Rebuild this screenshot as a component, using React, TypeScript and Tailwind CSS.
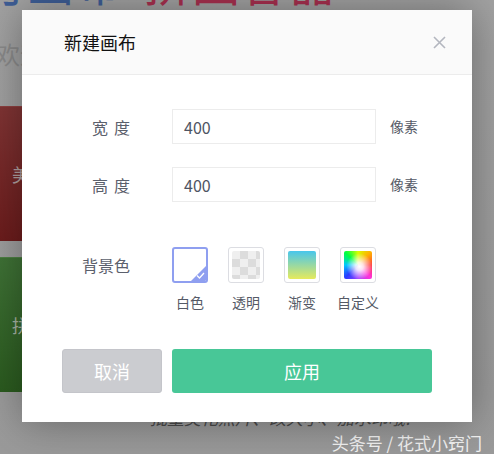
import React from "react";

const cjk = { fontFamily: '"Noto Sans CJK SC", "Noto Sans", sans-serif' };

function Swatch({ kind, label }: { kind: string; label: string }) {
  let box: React.ReactNode;
  if (kind === "white") {
    box = (
      <div className="relative w-[36px] h-[36px] rounded-[3px] border-2 border-[#8f9ff0] bg-white overflow-hidden">
        <div className="absolute right-0 bottom-0 w-[15px] h-[15px] bg-[#8f9ff0] [clip-path:polygon(100%_0,100%_100%,0_100%)]" />
        <svg className="absolute right-[1px] bottom-[2px]" width="9" height="7" viewBox="0 0 9 7">
          <path d="M1 3.5 L3.5 6 L8 1" fill="none" stroke="white" strokeWidth="1.3" />
        </svg>
      </div>
    );
  } else {
    const inner =
      kind === "transparent"
        ? "bg-[image:conic-gradient(#dcdcdc_25%,#efefef_0_50%,#dcdcdc_0_75%,#efefef_0)] bg-[length:16px_16px]"
        : kind === "gradient"
        ? "bg-[image:linear-gradient(180deg,#48c6ec,#e6ea5c)]"
        : "bg-[image:radial-gradient(circle_at_55%_55%,#ffffff_0%,rgba(255,255,255,0.85)_18%,rgba(255,255,255,0)_60%),conic-gradient(from_0deg,#d8ff00,#ffb000_45deg,#ff3a3a_90deg,#ff30d8_135deg,#a040ff_180deg,#2a3cff_225deg,#00c8ff_270deg,#00ff40_315deg,#d8ff00_360deg)]";
    box = (
      <div className="w-[36px] h-[36px] rounded-[3px] border border-[#dcdde2] bg-white p-[3px]">
        <div className={`w-full h-full rounded-[2px] ${inner}`} />
      </div>
    );
  }
  return (
    <div className="flex flex-col items-center w-[36px]">
      {box}
      <div className="mt-[11px] text-[14px] leading-[16px] text-[#555a66] whitespace-nowrap" style={cjk}>
        {label}
      </div>
    </div>
  );
}

function Row({ label, value }: { label: React.ReactNode; value: string }) {
  return (
    <div className="flex items-center h-[35px]">
      <div className="w-[108px] flex justify-end text-[16px] text-[#5b606c]" style={cjk}>
        {label}
      </div>
      <div
        className="ml-[42px] w-[204px] h-[35px] border border-[#ececec] bg-white flex items-center pl-[11px] text-[16px] text-[#4e5462]"
        style={cjk}
      >
        {value}
      </div>
      <div className="ml-[14px] text-[14px] text-[#555a66]" style={cjk}>
        像素
      </div>
    </div>
  );
}

export default function App() {
  return (
    <div className="relative w-[494px] h-[454px] overflow-hidden bg-[image:linear-gradient(180deg,#a2a2a2,#9a9a9a)]" style={cjk}>
      {/* background page */}
      <div className="flex items-start mt-[-44px] ml-[-22px] text-[48px] leading-none whitespace-nowrap">
        <span className="text-[#3e5e96]">可画布</span>
        <span className="ml-[22px] text-[#a8304f]">拼图容器</span>
      </div>
      <div className="mt-[38px] ml-[-4px] text-[24px] leading-none text-[#8a8a8a]">欢迎</div>
      <div className="mt-[40px] flex flex-col gap-[16px] ml-[-60px]">
        <div className="w-[160px] h-[135px] rounded-[3px] border-t border-[#8e4040] bg-[image:linear-gradient(180deg,#803434,#6c1c1c)] flex items-center pl-[72px] text-[18px] text-[#b0a0a0]">
          美
        </div>
        <div className="w-[160px] h-[135px] rounded-[3px] border-t border-[#4e8044] bg-[image:linear-gradient(180deg,#3f7236,#2b5b1f)] flex items-center pl-[72px] text-[18px] text-[#a8b4a4]">
          拼
        </div>
      </div>
      <div className="absolute left-[150px] top-[408px] text-[17px] leading-[20px] italic text-[#4a4a4a] whitespace-nowrap">
        批量美化照片、改大小、加水印哦!
      </div>
      <div className="absolute right-[12px] top-[433px] text-[17px] leading-[20px] text-[#f4f4f4] whitespace-nowrap">
        头条号 / 花式小窍门
      </div>

      {/* modal */}
      <div className="absolute left-[22px] top-[10px] w-[450px] h-[412px] bg-white shadow-[0_0_40px_rgba(0,0,0,0.35)] flex flex-col">
        <div className="h-[65px] bg-[#fafafa] border-b border-[#ececec] flex items-center justify-between pl-[42px] pr-[26px]">
          <div className="text-[18px] text-[#111]" style={cjk}>
            新建画布
          </div>
          <svg width="13" height="13" viewBox="0 0 13 13">
            <path d="M1 1 L12 12 M12 1 L1 12" stroke="#b3b6bf" strokeWidth="1.6" />
          </svg>
        </div>
        <div className="pt-[34px] flex flex-col">
          <Row
            label={
              <>
                <span>宽</span>
                <span className="ml-[6px]">度</span>
              </>
            }
            value="400"
          />
          <div className="h-[23px]" />
          <Row
            label={
              <>
                <span>高</span>
                <span className="ml-[6px]">度</span>
              </>
            }
            value="400"
          />
          <div className="mt-[45px] flex items-start">
            <div className="w-[108px] h-[36px] flex items-center justify-end text-[16px] text-[#5b606c]">背景色</div>
            <div className="ml-[42px] flex gap-[20px]">
              <Swatch kind="white" label="白色" />
              <Swatch kind="transparent" label="透明" />
              <Swatch kind="gradient" label="渐变" />
              <Swatch kind="custom" label="自定义" />
            </div>
          </div>
          <div className="mt-[39px] flex pl-[40px] gap-[10px]">
            <button className="w-[100px] h-[44px] rounded-[3px] bg-[#cbccd0] border border-[#c4c5ca] text-white text-[18px]">
              取消
            </button>
            <button className="w-[260px] h-[44px] rounded-[3px] bg-[#48c797] text-white text-[18px]">应用</button>
          </div>
        </div>
      </div>
    </div>
  );
}
